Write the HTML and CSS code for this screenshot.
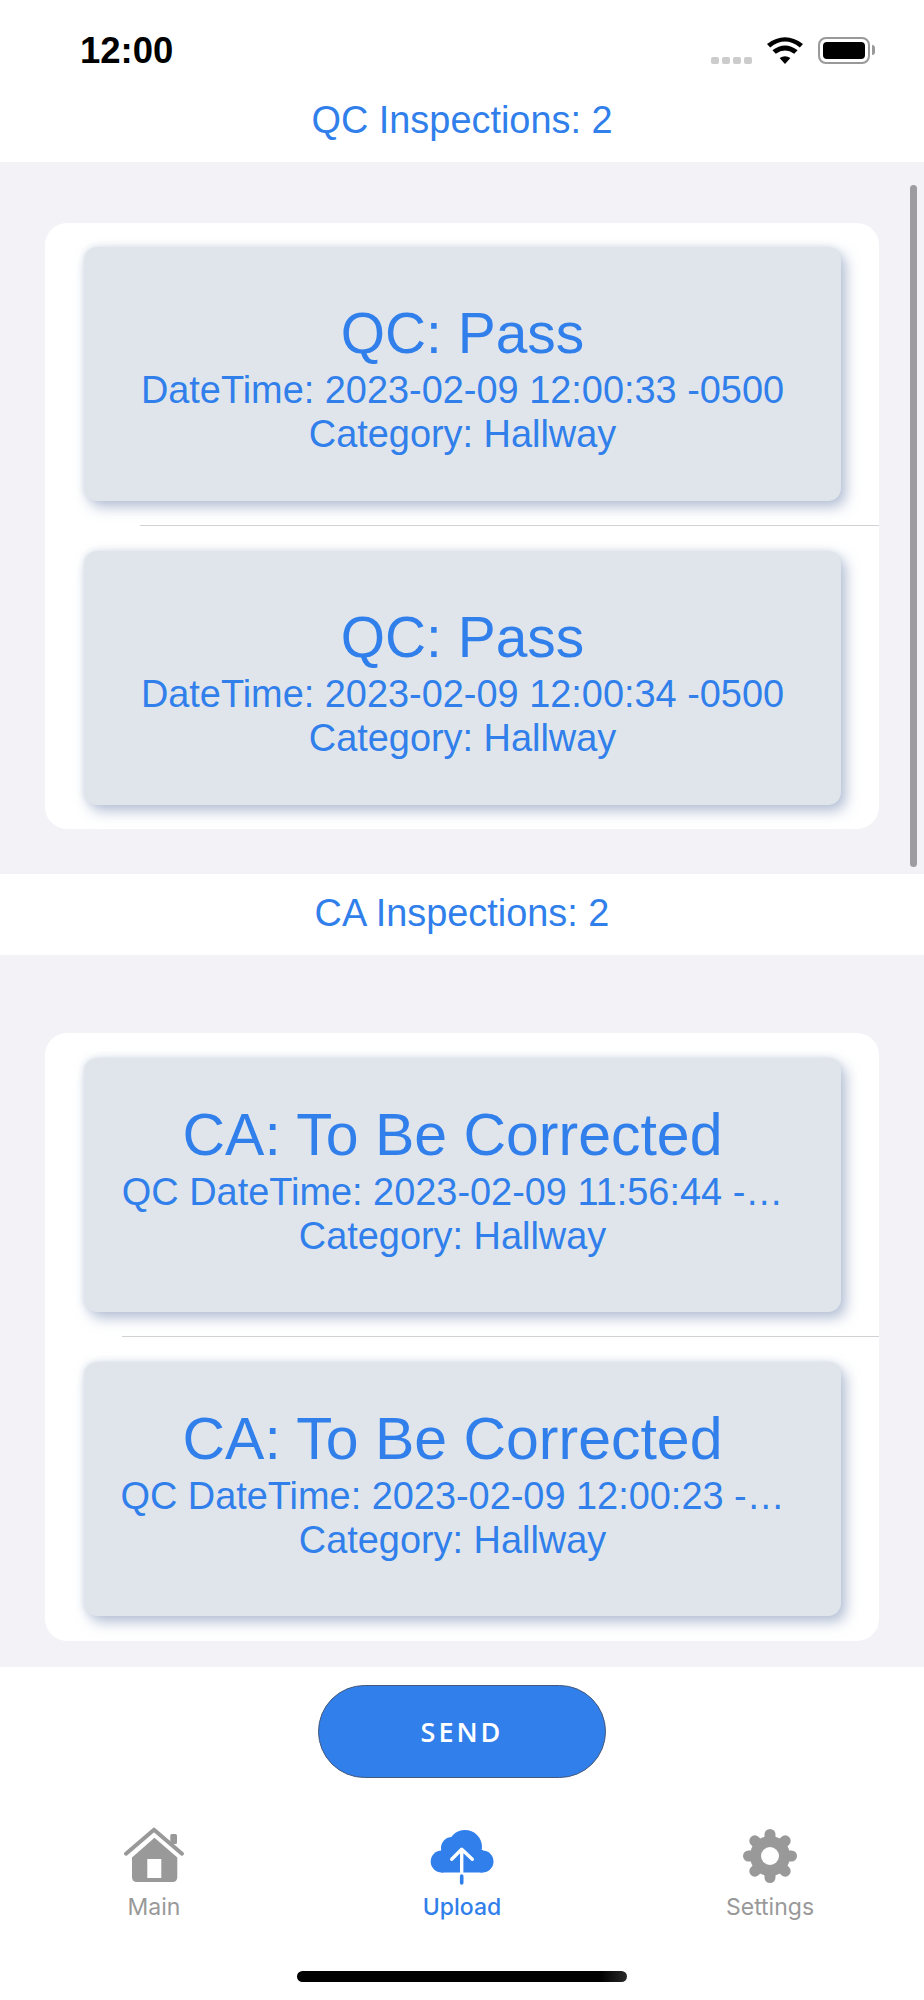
FILE: index.html
```html
<!DOCTYPE html>
<html lang="en">
<head>
  <meta charset="UTF-8">
  <title>Upload</title>
  <link rel="stylesheet" href="styles.css">
</head>
<body>
  <div class="status">
    <span class="time">12:00</span>
    <div class="status-icons">
      <div class="signal"><i></i><i></i><i></i><i></i></div>
      <svg class="wifi" width="36" height="27" viewBox="0 0 36 27">
        <path d="M18 27 L12.6 21 Q18 17.4 23.4 21 Z"/>
        <path d="M8.8 16.8 L5.4 13.2 Q18 3.8 30.6 13.2 L27.2 16.8 Q18 10 8.8 16.8 Z"/>
        <path d="M3.2 10.4 L0 7 Q18 -6.4 36 7 L32.8 10.4 Q18 -1.4 3.2 10.4 Z"/>
      </svg>
      <div class="battery"><div class="battery-fill"></div></div>
    </div>
  </div>

  <div class="bar bar-first">QC Inspections: 2</div>
  <div class="list">
    <div class="scrollbar"></div>
    <div class="group">
      <div class="card">
        <div class="card-title">QC: Pass</div>
        <div class="card-line">DateTime: 2023-02-09 12:00:33 -0500</div>
        <div class="card-line">Category: Hallway</div>
      </div>
      <div class="sep sep-qc"></div>
      <div class="card">
        <div class="card-title">QC: Pass</div>
        <div class="card-line">DateTime: 2023-02-09 12:00:34 -0500</div>
        <div class="card-line">Category: Hallway</div>
      </div>
    </div>
  </div>

  <div class="bar bar-second">CA Inspections: 2</div>
  <div class="list list-ca">
    <div class="group group-ca">
      <div class="card card-ca">
        <div class="card-title">CA: To Be Corrected</div>
        <div class="card-line">QC DateTime: 2023-02-09 11:56:44 -…</div>
        <div class="card-line">Category: Hallway</div>
      </div>
      <div class="sep sep-ca"></div>
      <div class="card card-ca">
        <div class="card-title">CA: To Be Corrected</div>
        <div class="card-line">QC DateTime: 2023-02-09 12:00:23 -…</div>
        <div class="card-line">Category: Hallway</div>
      </div>
    </div>
  </div>

  <div class="send-wrap">
    <button class="send">SEND</button>
  </div>

  <div class="tabs">
    <div class="tab">
      <svg class="tab-icon" width="62" height="58" viewBox="-1 -1 62 58">
        <path d="M2 25.7 L30 1.7 L58 25.7" fill="none" stroke="#999" stroke-width="4" stroke-linecap="round" stroke-linejoin="round"/>
        <rect x="46.3" y="6" width="6.7" height="10" rx="1.5" fill="#999"/>
        <path d="M30.5 9.7 L53.3 29.5 V49 Q53.3 54 48.3 54 H13 Q8 54 8 49 V29.5 Z" fill="#999"/>
        <rect x="23.3" y="31" width="14" height="19" fill="#fff"/>
      </svg>
      <span>Main</span>
    </div>
    <div class="tab tab-active">
      <svg class="tab-icon" width="64" height="58" viewBox="0 -3 64 58">
        <g fill="#307FEB">
          <circle cx="11.7" cy="31.5" r="11"/>
          <circle cx="22" cy="18" r="11"/>
          <circle cx="35" cy="17" r="17"/>
          <circle cx="52.5" cy="31.5" r="11"/>
          <rect x="11" y="20" width="42" height="22.5"/>
        </g>
        <path d="M31.7 42.5 V20 M21.7 29.3 L31.7 19.3 L42.3 29.3" fill="none" stroke="#fff" stroke-width="3.4" stroke-linecap="round" stroke-linejoin="round"/>
        <path d="M31.7 46 V53" fill="none" stroke="#307FEB" stroke-width="3.6" stroke-linecap="round"/>
      </svg>
      <span>Upload</span>
    </div>
    <div class="tab">
      <svg class="tab-icon" width="54" height="58" viewBox="-27 -29 54 58">
        <g stroke="#999" stroke-width="11" stroke-linecap="round">
          <line x1="0" y1="-21.5" x2="0" y2="21.5"/>
          <line x1="-21.5" y1="0" x2="21.5" y2="0"/>
          <line x1="-15.2" y1="-15.2" x2="15.2" y2="15.2"/>
          <line x1="-15.2" y1="15.2" x2="15.2" y2="-15.2"/>
        </g>
        <circle r="20" fill="#999"/>
        <circle r="9" fill="#fff"/>
      </svg>
      <span>Settings</span>
    </div>
  </div>

  <div class="home-indicator"></div>
</body>
</html>
```

FILE: styles.css
```css
* {
  box-sizing: border-box;
}
body {
  margin: 0;
  height: 2000px;
  background: white;
  font-family: "Liberation Sans", Arial, sans-serif;
  color: #307FEB;
  overflow: hidden;
}
.status {
  height: 100px;
  padding: 31px 48px 0 80px;
  display: flex;
  justify-content: space-between;
  align-items: flex-start;
}
.time {
  font-size: 36.5px;
  line-height: 40px;
  font-weight: bold;
  color: black;
}
.status-icons {
  display: flex;
  align-items: center;
  height: 38px;
}
.signal {
  display: flex;
  gap: 3px;
  margin-top: 20px;
  margin-right: 15px;
}
.signal i {
  width: 8px;
  height: 7px;
  border-radius: 2px;
  background: #ccc;
}
.wifi {
  fill: black;
  margin-right: 15px;
}
.battery {
  position: relative;
  width: 52px;
  height: 27px;
  margin-right: 6px;
  padding: 3px;
  border: 2px solid #999;
  border-radius: 8px;
}
.battery::after {
  content: "";
  position: absolute;
  right: -7px;
  top: 6px;
  width: 3px;
  height: 10px;
  background: #999;
  border-radius: 0 3px 3px 0;
}
.battery-fill {
  height: 100%;
  background: black;
  border-radius: 4px;
}
.bar {
  text-align: center;
  font-size: 37.9px;
  line-height: 44px;
}
.bar-first {
  height: 62px;
  line-height: 40px;
}
.bar-second {
  height: 81px;
  padding-top: 17px;
}
.list {
  position: relative;
  height: 712px;
  padding: 61px 45px 0;
  background: #F2F2F7;
}
.list-ca {
  padding-top: 78px;
}
.scrollbar {
  position: absolute;
  left: 910px;
  top: 23px;
  width: 7px;
  height: 682px;
  border-radius: 4px;
  background: #9c9ca1;
}
.group {
  display: flex;
  flex-direction: column;
  padding: 24px 38px 24px 39px;
  background: white;
  border-radius: 22px;
}
.group-ca {
  padding-top: 25px;
  padding-bottom: 25px;
}
.card {
  height: 254px;
  padding: 51px 38px 0;
  display: flex;
  flex-direction: column;
  align-items: center;
  background: #E0E5EC;
  border-radius: 13px;
  box-shadow: 5px 6px 14px rgba(140, 158, 190, 0.65), -1px -1px 6px rgba(140, 158, 190, 0.2);
}
.card-title {
  font-size: 56.9px;
  line-height: 70px;
}
.card-line {
  font-size: 37.9px;
  line-height: 44px;
  white-space: nowrap;
}
.card-ca {
  padding-top: 42px;
  padding-right: 58px;
}
.card-ca .card-title {
  font-size: 59px;
  line-height: 70px;
}
.sep {
  height: 1px;
  margin: 24px -38px 25px 0;
  background: #d2d2d6;
}
.sep-qc {
  margin-left: 56px;
}
.sep-ca {
  margin-left: 38px;
}
.send-wrap {
  display: flex;
  justify-content: center;
  padding-top: 18px;
}
.send {
  width: 288px;
  height: 93px;
  border: 1px solid #44597a;
  border-radius: 47px;
  background: #307FEB;
  color: white;
  font-family: "Open Sans", sans-serif;
  font-size: 27px;
  font-weight: 600;
  letter-spacing: 3px;
}
.tabs {
  display: flex;
  justify-content: space-between;
  padding: 49px 0 0;
}
.tab {
  width: 308px;
  display: flex;
  flex-direction: column;
  align-items: center;
  color: #999;
  font-family: Inter, sans-serif;
  font-size: 23px;
  line-height: 30px;
}
.tab-icon {
  display: block;
  margin-bottom: 7px;
}
.tab-active {
  color: #307FEB;
  font-weight: 500;
}
.home-indicator {
  position: absolute;
  left: 297px;
  top: 1971px;
  width: 330px;
  height: 11px;
  border-radius: 6px;
  background: linear-gradient(90deg, black 92%, #2a2a2a);
}
```
